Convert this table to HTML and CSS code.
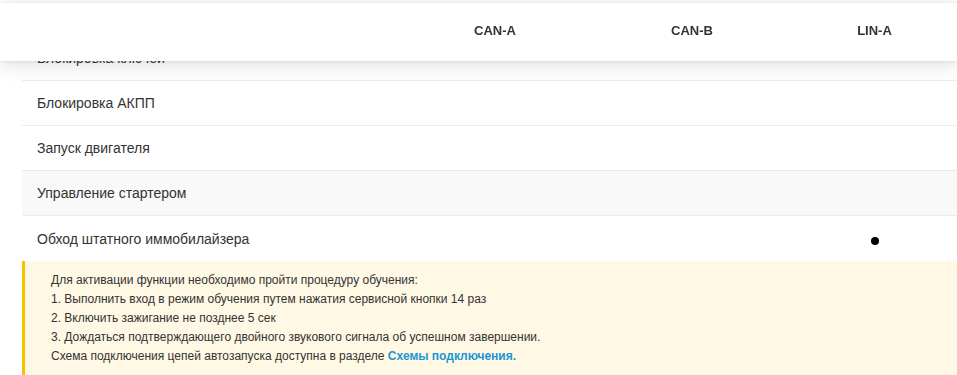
FILE: index.html
```html
<!DOCTYPE html>
<html lang="ru">
<head>
  <meta charset="UTF-8">
  <title>Функции автозапуска</title>
  <link rel="stylesheet" href="styles.css">
</head>
<body>
  <!-- sticky header of the table, floats over the rows -->
  <div class="table-head">
    <div class="cols">
      <div class="col-label"></div>
      <div class="col">CAN-A</div>
      <div class="col">CAN-B</div>
      <div class="col">LIN-A</div>
    </div>
  </div>

  <div class="features">
    <div class="row cols">
      <div class="col-label">Блокировка ключей</div>
      <div class="col"></div><div class="col"></div><div class="col"></div>
    </div>
    <div class="row cols">
      <div class="col-label">Блокировка АКПП</div>
      <div class="col"></div><div class="col"></div><div class="col"></div>
    </div>
    <div class="row cols">
      <div class="col-label">Запуск двигателя</div>
      <div class="col"></div><div class="col"></div><div class="col"></div>
    </div>
    <div class="row row-alt cols">
      <div class="col-label">Управление стартером</div>
      <div class="col"></div><div class="col"></div><div class="col"></div>
    </div>
    <div class="row row-last cols">
      <div class="col-label">Обход штатного иммобилайзера</div>
      <div class="col"></div><div class="col"></div><div class="col"><span class="dot"></span></div>
    </div>

    <div class="note">
      <p>Для активации функции необходимо пройти процедуру обучения:</p>
      <p>1. Выполнить вход в режим обучения путем нажатия сервисной кнопки 14 раз</p>
      <p>2. Включить зажигание не позднее 5 сек</p>
      <p>3. Дождаться подтверждающего двойного звукового сигнала об успешном завершении.</p>
      <p>Схема подключения цепей автозапуска доступна в разделе <a href="#" class="note-link">Схемы подключения.</a></p>
    </div>
  </div>
</body>
</html>
```

FILE: styles.css
```css
html, body {
  margin: 0;
  padding: 0;
  overflow: hidden;
}
body {
  background: #fff;
  font-family: 'Liberation Sans', Arial, sans-serif;
  color: #333;
  padding-top: 36px;
}

/* shared column grid */
.cols {
  display: grid;
  grid-template-columns: 376px 194px 200px 1fr;
  align-items: center;
}
.col {
  text-align: center;
}

/* --- HEADER --- */
.table-head {
  position: fixed;
  top: 3px; left: 0; right: 0;
  height: 58px;
  padding-left: 22px;
  background: #fff;
  box-shadow: 0 0 5px rgba(0,0,0,0.12), 0 6px 18px rgba(0,0,0,0.10);
  z-index: 5;
  display: flex;
  flex-direction: column;
  justify-content: center;
}
.table-head .cols {
  font-size: 13px;
  font-weight: bold;
  color: #333;
  padding-bottom: 3px;
}

/* --- ROWS --- */
.features {
  margin-left: 22px;
}
.row {
  height: 44px;
  border-bottom: 1px solid #ececec;
  font-size: 14px;
}
.row .col-label {
  padding-left: 15px;
}
.row-alt {
  background: #f9f9f9;
}
.row-last {
  border-bottom: none;
  height: 45px;
}
.dot {
  display: inline-block;
  width: 8px;
  height: 8px;
  border-radius: 50%;
  background: #000;
  vertical-align: middle;
  margin-top: 3px;
}

/* --- NOTE --- */
.note {
  background: #fff8e5;
  border-left: 3px solid #f7c100;
  padding: 10px 0 12px 26px;
  font-size: 12px;
  line-height: 19px;
  color: #333;
}
.note p {
  margin: 0;
}
.note-link {
  color: #1a96d4;
  font-weight: bold;
  text-decoration: none;
}
```
